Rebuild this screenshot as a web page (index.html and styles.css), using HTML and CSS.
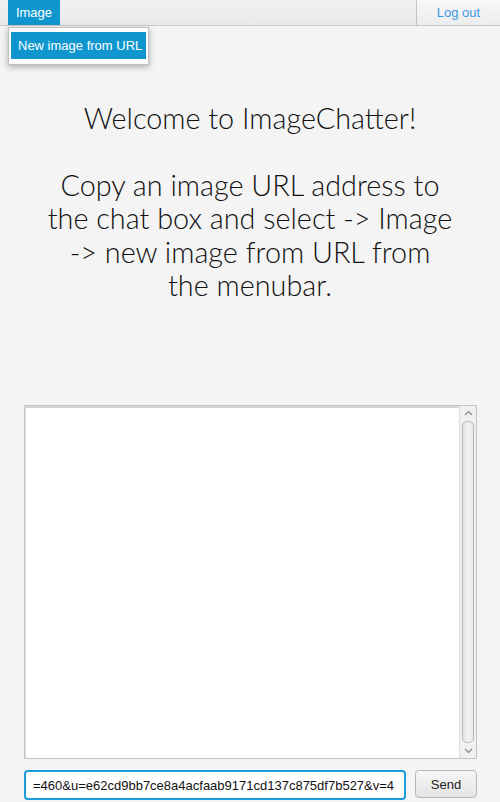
FILE: index.html
```html
<!DOCTYPE html>
<html>
<head>
<meta charset="utf-8">
<link rel="stylesheet" href="styles.css">
</head>
<body>
<div class="menubar">
  <div class="menu active">Image</div>
  <div class="spacer"></div>
  <div class="logout">Log out</div>
</div>
<div class="popup">
  <div class="popup-item">New image from URL</div>
</div>
<div class="welcome">Welcome to ImageChatter!<br><br>Copy an image URL address to<br>the chat box and select -&gt; Image<br>-&gt; new image from URL from<br>the menubar.</div>
<div class="chat">
  <div class="chat-body"></div>
  <div class="scrollbar">
    <div class="arrow up"><svg width="9" height="6" viewBox="0 0 9 6"><path d="M1 5 L4.5 1.5 L8 5" fill="none" stroke="#8a8a8a" stroke-width="1.2"/></svg></div>
    <div class="track"><div class="thumb"></div></div>
    <div class="arrow down"><svg width="9" height="6" viewBox="0 0 9 6"><path d="M1 1 L4.5 4.5 L8 1" fill="none" stroke="#8a8a8a" stroke-width="1.2"/></svg></div>
  </div>
</div>
<div class="inputrow">
  <div class="field">=460&amp;u=e62cd9bb7ce8a4acfaab9171cd137c875df7b527&amp;v=4</div>
  <div class="send">Send</div>
</div>
</body>
</html>
```
FILE: styles.css
```css
html, body { margin: 0; padding: 0; }
body {
  width: 500px;
  height: 802px;
  background: #f4f4f4;
  font-family: "Liberation Sans", Arial, sans-serif;
  font-size: 13px;
  overflow: hidden;
  position: relative;
}
.menubar {
  height: 25px;
  display: flex;
  align-items: stretch;
  background: linear-gradient(#f2f2f2, #e9e9e9);
  border-bottom: 1px solid #c9c9c9;
}
.menu {
  margin-left: 8px;
  width: 52px;
  display: flex;
  align-items: center;
  justify-content: center;
  color: #fff;
}
.menu.active { background: #0f96cf; }
.spacer { flex: 1; }
.logout {
  width: 83px;
  border-left: 1px solid #c4c4c4;
  background: linear-gradient(#f8f8f8, #ececec);
  color: #3d9be6;
  display: flex;
  align-items: center;
  justify-content: center;
}
.popup {
  position: absolute;
  left: 8px;
  top: 27px;
  width: 135px;
  padding: 4px 2px 5px 2px;
  background: #fdfdfd;
  border: 1px solid #c0c0c0;
  box-shadow: 0 2px 6px rgba(0,0,0,0.3);
}
.popup-item {
  height: 27px;
  background: #0f96cf;
  color: #fff;
  display: flex;
  align-items: center;
  padding-left: 7px;
}
.welcome {
  margin-top: 76px;
  text-align: center;
  font-family: "Lato", "Open Sans", sans-serif;
  font-weight: 300;
  font-size: 28.8px;
  line-height: 33.4px;
  color: #111;
}
.chat {
  margin: 103px 0 0 24px;
  width: 451px;
  height: 352px;
  border: 1px solid #c4c4c4;
  background: #fff;
  display: flex;
}
.chat-body { flex: 1; border-top: 2px solid #d6d6d6; border-left: 1px solid #dedede; }
.scrollbar {
  width: 16px;
  background: #f0f0f0;
  border-left: 1px solid #dedede;
  display: flex;
  flex-direction: column;
  align-items: center;
}
.arrow { height: 14px; display: flex; align-items: center; justify-content: center; }
.track { flex: 1; width: 100%; display: flex; justify-content: center; padding: 1px 0; box-sizing: border-box; }
.thumb {
  width: 10px;
  border: 1px solid #b8b8b8;
  border-radius: 5px;
  background: linear-gradient(90deg, #e4e4e4, #f4f4f4 60%, #e8e8e8);
}
.inputrow {
  margin: 11px 0 0 24px;
  display: flex;
  align-items: flex-start;
  gap: 9px;
}
.field {
  width: 371px;
  height: 26px;
  border: 2px solid #1a9dd9;
  border-radius: 4px;
  background: #fff;
  box-sizing: content-box;
  padding-left: 7px;
  display: flex;
  align-items: center;
  color: #111;
  white-space: nowrap;
  overflow: hidden;
  font-size: 13px;
}
.send {
  width: 60px;
  height: 26px;
  border: 1px solid #b6b6b6;
  border-radius: 4px;
  background: linear-gradient(#f7f7f7, #e3e3e3);
  display: flex;
  align-items: center;
  justify-content: center;
  color: #222;
}
```
